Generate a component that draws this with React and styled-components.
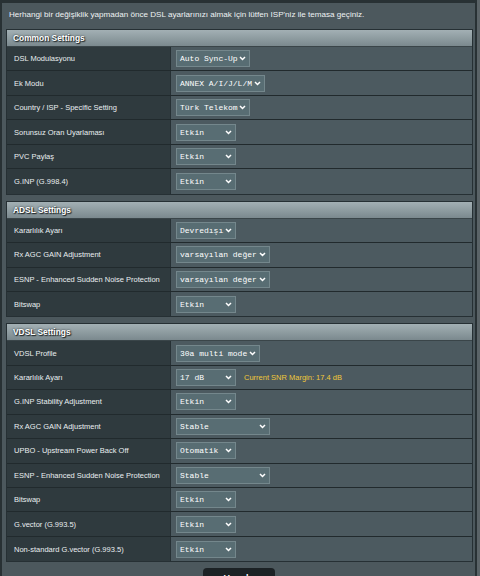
import React from "react";
import styled, { createGlobalStyle } from "styled-components";

const GlobalStyle = createGlobalStyle`
  html, body {
    margin: 0;
    padding: 0;
    background: #5a6367;
  }
  body {
    font-family: "Liberation Sans", Arial, sans-serif;
    overflow: hidden;
  }
`;

const Page = styled.div`
  box-sizing: border-box;
  width: 477px;
  min-height: 576px;
  background: #4c585d;
  border-top: 3px solid #283134;
  border-left: 2px solid #283134;
  border-right: 2px solid #283134;
`;

const Notice = styled.div`
  height: 26px;
  padding-left: 7px;
  line-height: 24px;
  font-size: 8.1px;
  color: #eef2f3;
`;

const Section = styled.div`
  margin: 0 2px 6px 4px;
  border: 1px solid #263034;
`;

const Header = styled.div`
  height: 16px;
  padding-left: 6px;
  display: flex;
  align-items: center;
  background: linear-gradient(#a3b0b4, #7b898e);
  border-bottom: 1px solid #3a4549;
  color: #ffffff;
  font-weight: bold;
  font-size: 8.4px;
  text-shadow: 0 0 2px #1d2426, 1px 1px 1px #1d2426;
`;

const Row = styled.div`
  box-sizing: border-box;
  display: grid;
  grid-template-columns: 164px 1fr;
  height: 24.45px;
  border-bottom: 1px solid #212a2d;
  &:last-child {
    border-bottom: none;
  }
`;

const Label = styled.div`
  display: flex;
  align-items: center;
  padding-left: 7px;
  background: #2f3a3e;
  border-right: 1px solid #263034;
  color: #e9eef0;
  font-size: 7.5px;
`;

const Value = styled.div`
  display: flex;
  align-items: center;
  gap: 8px;
  padding-left: 5px;
  background: #4c5a60;
`;

const SelectBox = styled.div`
  box-sizing: border-box;
  width: ${(p) => p.$w}px;
  height: 17px;
  display: flex;
  align-items: center;
  justify-content: space-between;
  padding: 0 3px 0 3px;
  background: #586d73;
  border: 1px solid #74878c;
  color: #ffffff;
  font-family: "Liberation Mono", "Courier New", monospace;
  font-size: 8px;
  white-space: nowrap;
`;

const Hint = styled.span`
  color: #f0c83a;
  font-size: 7.5px;
`;

const ButtonBar = styled.div`
  display: flex;
  justify-content: center;
`;

const ApplyButton = styled.div`
  width: 72px;
  height: 22px;
  background: #1c2225;
  border-radius: 4px;
  color: #ffffff;
  font-weight: bold;
  font-size: 9px;
  text-align: center;
  line-height: 20px;
`;

const Chevron = () => (
  <svg width="7" height="5" viewBox="0 0 7 5">
    <polyline points="1,1 3.5,3.5 6,1" fill="none" stroke="#ffffff" strokeWidth="1.5" />
  </svg>
);

const Select = ({ value, width = 60 }) => (
  <SelectBox $w={width}>
    <span>{value}</span>
    <Chevron />
  </SelectBox>
);

const sections = [
  {
    title: "Common Settings",
    rows: [
      ["DSL Modulasyonu", "Auto Sync-Up", 74],
      ["Ek Modu", "ANNEX A/I/J/L/M", 89],
      ["Country / ISP - Specific Setting", "Türk Telekom", 74],
      ["Sorunsuz Oran Uyarlaması", "Etkin", 60],
      ["PVC Paylaş", "Etkin", 60],
      ["G.INP (G.998.4)", "Etkin", 60],
    ],
  },
  {
    title: "ADSL Settings",
    rows: [
      ["Kararlılık Ayarı", "Devredışı", 60],
      ["Rx AGC GAIN Adjustment", "varsayılan değer", 94],
      ["ESNP - Enhanced Sudden Noise Protection", "varsayılan değer", 94],
      ["Bitswap", "Etkin", 60],
    ],
  },
  {
    title: "VDSL Settings",
    rows: [
      ["VDSL Profile", "30a multi mode", 84],
      ["Kararlılık Ayarı", "17 dB", 60, "Current SNR Margin: 17.4 dB"],
      ["G.INP Stability Adjustment", "Etkin", 60],
      ["Rx AGC GAIN Adjustment", "Stable", 94],
      ["UPBO - Upstream Power Back Off", "Otomatik", 60],
      ["ESNP - Enhanced Sudden Noise Protection", "Stable", 94],
      ["Bitswap", "Etkin", 60],
      ["G.vector (G.993.5)", "Etkin", 60],
      ["Non-standard G.vector (G.993.5)", "Etkin", 60],
    ],
  },
];

const App = () => {
  return (
    <>
      <GlobalStyle />
      <Page>
        <Notice>
          Herhangi bir değişiklik yapmadan önce DSL ayarlarınızı almak için lütfen ISP'niz ile temasa geçiniz.
        </Notice>
        {sections.map((s) => (
          <Section key={s.title}>
            <Header>{s.title}</Header>
            {s.rows.map(([label, value, width, hint]) => (
              <Row key={label}>
                <Label>{label}</Label>
                <Value>
                  <Select value={value} width={width} />
                  {hint && <Hint>{hint}</Hint>}
                </Value>
              </Row>
            ))}
          </Section>
        ))}
        <ButtonBar>
          <ApplyButton>Uygula</ApplyButton>
        </ButtonBar>
      </Page>
    </>
  );
};

export default App;
